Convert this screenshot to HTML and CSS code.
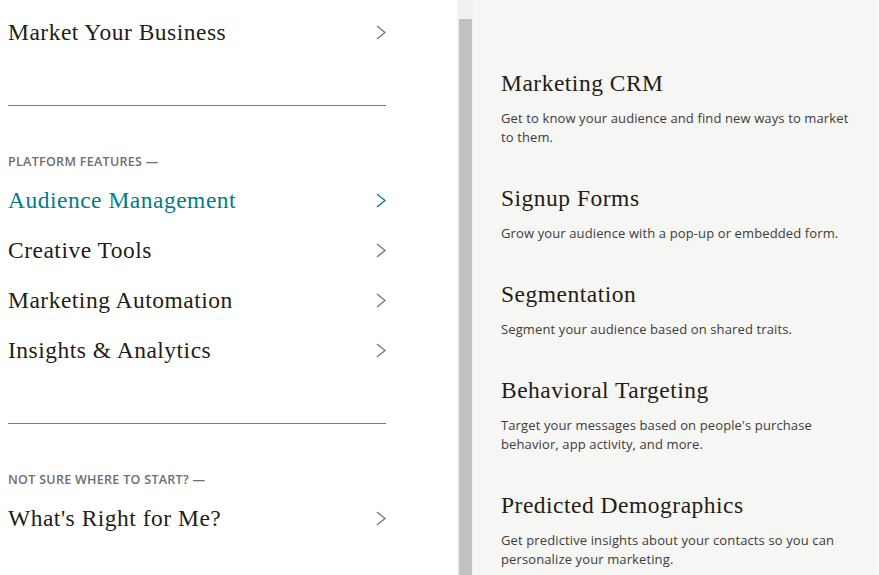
FILE: index.html
```html
<!DOCTYPE html>
<html lang="en">
<head>
    <meta charset="UTF-8">
    <meta name="viewport" content="width=device-width, initial-scale=1.0">
    <title>Audience Management</title>
    <link rel="stylesheet" href="styles.css">
</head>
<body>
    <div class="menu">
        <nav class="nav">
            <a class="nav-link" href="#">
                <span>Market Your Business</span>
                <svg class="chevron" viewBox="0 0 10 15"><polyline points="1,1 9,7.5 1,14"/></svg>
            </a>
            <hr class="divider">
            <div class="nav-label">Platform Features —</div>
            <ul class="nav-list">
                <li><a class="nav-link active" href="#">
                    <span>Audience Management</span>
                    <svg class="chevron" viewBox="0 0 10 15"><polyline points="1,1 9,7.5 1,14"/></svg>
                </a></li>
                <li><a class="nav-link" href="#">
                    <span>Creative Tools</span>
                    <svg class="chevron" viewBox="0 0 10 15"><polyline points="1,1 9,7.5 1,14"/></svg>
                </a></li>
                <li><a class="nav-link" href="#">
                    <span>Marketing Automation</span>
                    <svg class="chevron" viewBox="0 0 10 15"><polyline points="1,1 9,7.5 1,14"/></svg>
                </a></li>
                <li><a class="nav-link" href="#">
                    <span>Insights &amp; Analytics</span>
                    <svg class="chevron" viewBox="0 0 10 15"><polyline points="1,1 9,7.5 1,14"/></svg>
                </a></li>
            </ul>
            <hr class="divider">
            <div class="nav-label">Not sure where to start? —</div>
            <a class="nav-link" href="#">
                <span>What's Right for Me?</span>
                <svg class="chevron" viewBox="0 0 10 15"><polyline points="1,1 9,7.5 1,14"/></svg>
            </a>
        </nav>

        <div class="scrollbar"><div class="scroll-thumb"></div></div>

        <div class="panel">
            <div class="feature">
                <h3>Marketing CRM</h3>
                <p>Get to know your audience and find new ways to market to them.</p>
            </div>
            <div class="feature">
                <h3>Signup Forms</h3>
                <p>Grow your audience with a pop-up or embedded form.</p>
            </div>
            <div class="feature">
                <h3>Segmentation</h3>
                <p>Segment your audience based on shared traits.</p>
            </div>
            <div class="feature">
                <h3>Behavioral Targeting</h3>
                <p>Target your messages based on people's purchase behavior, app activity, and more.</p>
            </div>
            <div class="feature">
                <h3>Predicted Demographics</h3>
                <p>Get predictive insights about your contacts so you can personalize your marketing.</p>
            </div>
        </div>
    </div>
</body>
</html>
```

FILE: styles.css
```css
html, body {
    margin: 0;
    height: 100%;
    overflow: hidden;
}
body {
    font-family: "Open Sans", "Liberation Sans", sans-serif;
    color: #241c15;
    background: #fff;
}
.menu {
    display: flex;
    height: 575px;
}
.nav {
    width: 378px;
    padding: 7px 71px 0 8px;
    flex-shrink: 0;
}
.nav-list {
    list-style: none;
    margin: 5px 0 0;
    padding: 0;
}
.nav-link {
    display: flex;
    align-items: center;
    justify-content: space-between;
    height: 50px;
    font-family: "Liberation Serif", serif;
    font-size: 23.5px;
    letter-spacing: 0.5px;
    color: #241c15;
    text-decoration: none;
}
.nav-link.active {
    color: #007c89;
}
.chevron {
    width: 10px;
    height: 15px;
    fill: none;
    stroke: #777;
    stroke-width: 1.4;
}
.nav-link.active .chevron {
    stroke: #007c89;
}
.divider {
    border: none;
    border-top: 1px solid #7b7b7b;
    margin: 48px 0 0;
}
.nav-label {
    margin-top: 48px;
    height: 16px;
    line-height: 16px;
    font-size: 12.5px;
    font-weight: 600;
    letter-spacing: 0.3px;
    text-transform: uppercase;
    color: #6e6e6e;
}
.nav-label + .nav-link {
    margin-top: 5px;
}
.scrollbar {
    width: 16px;
    flex-shrink: 0;
    background: #f1f1f1;
    padding: 19px 1px 0 2px;
    box-sizing: border-box;
}
.scroll-thumb {
    height: 100%;
    background: #c1c1c1;
}
.panel {
    flex: 1;
    background: #f6f6f4;
    padding: 68px 0 0 28px;
    border-right: 3px solid #fafafa;
}
.feature {
    margin-bottom: 36px;
}
.feature h3 {
    margin: 0;
    font-family: "Liberation Serif", serif;
    font-weight: normal;
    font-size: 23.5px;
    letter-spacing: 0.5px;
    line-height: 30px;
    color: #241c15;
}
.feature p {
    margin: 11px 0 0;
    max-width: 352px;
    font-size: 13px;
    letter-spacing: 0.12px;
    line-height: 19px;
    color: #403b3b;
}
```
